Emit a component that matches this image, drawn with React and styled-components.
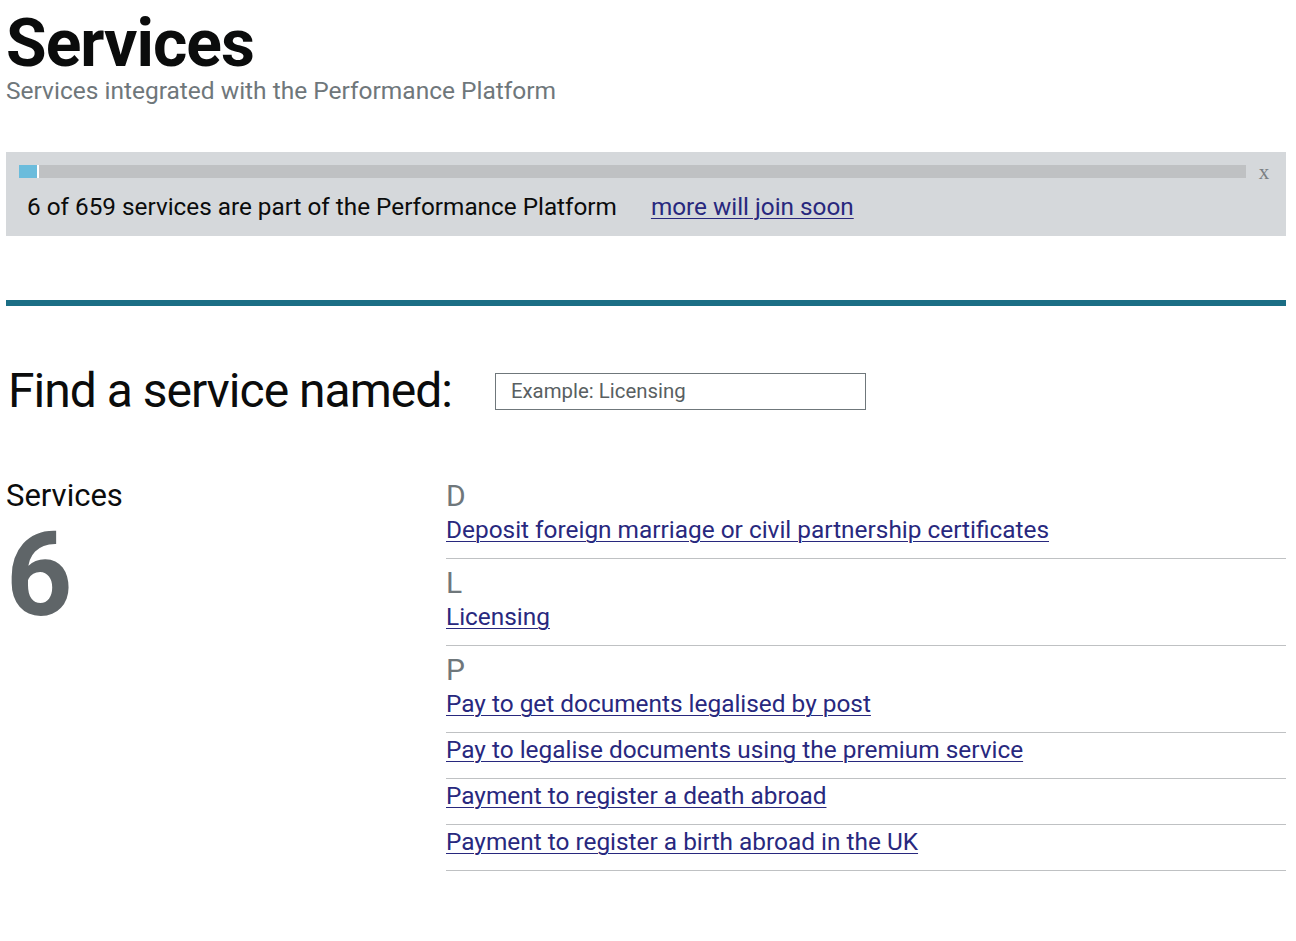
import styled, { createGlobalStyle } from "styled-components";

const GlobalStyle = createGlobalStyle`
  body {
    margin: 0;
    background: #fff;
    font-family: Roboto, "Liberation Sans", sans-serif;
    color: #0b0c0c;
  }
`;

const groups = [
  { letter: "D", items: ["Deposit foreign marriage or civil partnership certificates"] },
  { letter: "L", items: ["Licensing"] },
  {
    letter: "P",
    items: [
      "Pay to get documents legalised by post",
      "Pay to legalise documents using the premium service",
      "Payment to register a death abroad",
      "Payment to register a birth abroad in the UK",
    ],
  },
];

export default function App() {
  return (
    <Page>
      <GlobalStyle />
      <Header>
        <Title>Services</Title>
        <Subtitle>Services integrated with the Performance Platform</Subtitle>
      </Header>

      <Banner>
        <ProgressRow>
          <ProgressTrack>
            <ProgressFill style={{ width: `${(6 / 659) * 100 * 1.6}%` }} />
          </ProgressTrack>
          <CloseButton>x</CloseButton>
        </ProgressRow>
        <BannerText>
          6 of 659 services are part of the Performance Platform
          <Link href="#">more will join soon</Link>
        </BannerText>
      </Banner>

      <Rule />

      <FilterRow>
        <FilterLabel htmlFor="filter">Find a service named:</FilterLabel>
        <FilterInput id="filter" placeholder="Example: Licensing" />
      </FilterRow>

      <Content>
        <Summary>
          <SummaryLabel>Services</SummaryLabel>
          <SummaryCount>6</SummaryCount>
        </Summary>
        <List>
          {groups.map((g) => (
            <Group key={g.letter}>
              <Letter>{g.letter}</Letter>
              {g.items.map((item) => (
                <Item key={item}>
                  <Link href="#">{item}</Link>
                </Item>
              ))}
            </Group>
          ))}
        </List>
      </Content>
    </Page>
  );
}

const Page = styled.div`
  width: 1280px;
  padding: 0 10px 60px 6px;
`;

const Header = styled.header`
  padding-top: 8px;
`;

const Title = styled.h1`
  margin: 0;
  font-size: 66px;
  line-height: 72px;
  font-weight: 700;
  letter-spacing: -1px;
`;

const Subtitle = styled.p`
  margin: -3px 0 0;
  font-size: 24.5px;
  line-height: 28px;
  color: #6f777b;
`;

const Banner = styled.section`
  margin-top: 47px;
  height: 84px;
  box-sizing: border-box;
  background: #d5d8db;
  padding: 13px 0 0 13px;
`;

const ProgressRow = styled.div`
  display: flex;
  align-items: center;
  height: 13px;
`;

const ProgressTrack = styled.div`
  flex: 1;
  height: 13px;
  background: #bfc1c3;
`;

const ProgressFill = styled.div`
  height: 100%;
  background: #6bbcdc;
  border-right: 2px solid #fff;
`;

const CloseButton = styled.span`
  width: 36px;
  padding-right: 4px;
  text-align: center;
  font-family: "Liberation Serif", serif;
  font-size: 21px;
  line-height: 13px;
  color: #7b7f82;
  margin-top: 2px;
`;

const BannerText = styled.p`
  margin: 14px 0 0 8px;
  font-size: 24.3px;
  line-height: 30px;
  display: flex;
  gap: 34px;
`;

const Link = styled.a`
  color: #28287e;
  text-decoration: underline;
  text-underline-offset: 3px;
  text-decoration-thickness: 1px;
`;

const Rule = styled.hr`
  margin: 64px 0 0;
  border: 0;
  height: 6px;
  background: #1b6e85;
`;

const FilterRow = styled.div`
  display: flex;
  align-items: center;
  gap: 43px;
  margin-top: 57px;
  padding-left: 2px;
`;

const FilterLabel = styled.label`
  font-size: 48px;
  line-height: 56px;
  letter-spacing: -1px;
`;

const FilterInput = styled.input`
  width: 371px;
  height: 37px;
  box-sizing: border-box;
  border: 1px solid #6f777b;
  padding: 0 15px;
  font-family: inherit;
  font-size: 20.4px;
  color: #0b0c0c;
  outline: none;
  &::placeholder {
    color: #595f62;
  }
`;

const Content = styled.div`
  display: grid;
  grid-template-columns: 440px 1fr;
  margin-top: 59px;
`;

const Summary = styled.div``;

const SummaryLabel = styled.div`
  font-size: 31px;
  line-height: 36px;
`;

const SummaryCount = styled.div`
  font-size: 116px;
  line-height: 116px;
  font-weight: 700;
  color: #5f6568;
  margin-top: 3px;
  letter-spacing: -1px;
`;

const List = styled.div``;

const Group = styled.div`
  & + & {
    margin-top: 6px;
  }
`;

const Letter = styled.div`
  font-size: 30px;
  line-height: 36px;
  color: #6f777b;
`;

const Item = styled.div`
  font-size: 24.4px;
  line-height: 30px;
  padding: 1px 0 13px;
  border-bottom: 1px solid #bfc1c3;
  & + & {
    padding-top: 2px;
    padding-bottom: 13px;
  }
`;
